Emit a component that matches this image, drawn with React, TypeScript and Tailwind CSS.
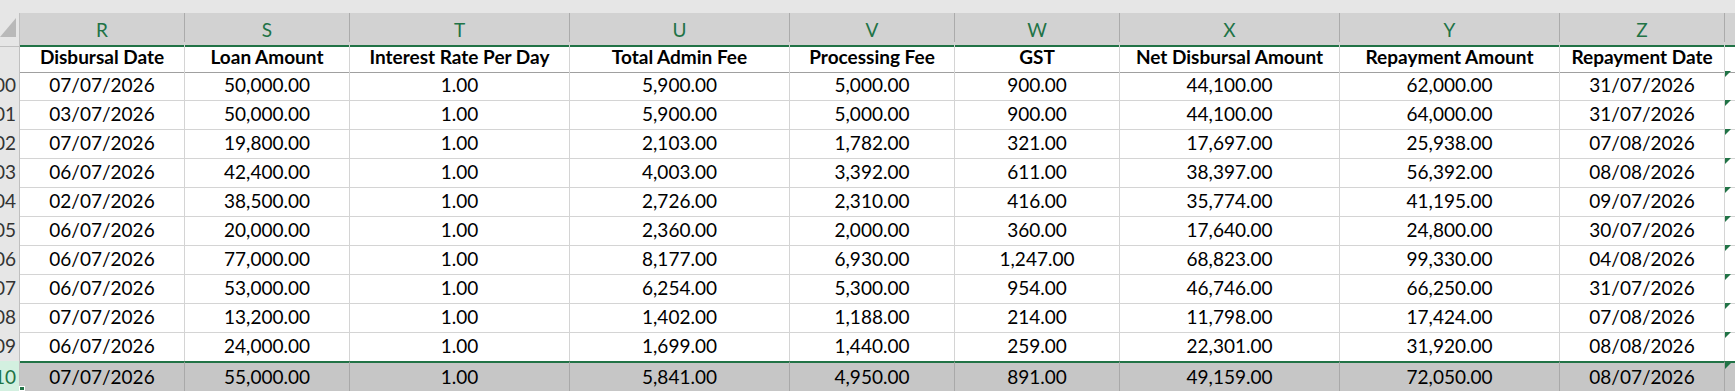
import React from "react";

const cols = ["R", "S", "T", "U", "V", "W", "X", "Y", "Z"];

const headers = [
  "Disbursal Date",
  "Loan Amount",
  "Interest Rate Per Day",
  "Total Admin Fee",
  "Processing Fee",
  "GST",
  "Net Disbursal Amount",
  "Repayment Amount",
  "Repayment Date",
];

const rows: string[][] = [
  ["07/07/2026", "50,000.00", "1.00", "5,900.00", "5,000.00", "900.00", "44,100.00", "62,000.00", "31/07/2026"],
  ["03/07/2026", "50,000.00", "1.00", "5,900.00", "5,000.00", "900.00", "44,100.00", "64,000.00", "31/07/2026"],
  ["07/07/2026", "19,800.00", "1.00", "2,103.00", "1,782.00", "321.00", "17,697.00", "25,938.00", "07/08/2026"],
  ["06/07/2026", "42,400.00", "1.00", "4,003.00", "3,392.00", "611.00", "38,397.00", "56,392.00", "08/08/2026"],
  ["02/07/2026", "38,500.00", "1.00", "2,726.00", "2,310.00", "416.00", "35,774.00", "41,195.00", "09/07/2026"],
  ["06/07/2026", "20,000.00", "1.00", "2,360.00", "2,000.00", "360.00", "17,640.00", "24,800.00", "30/07/2026"],
  ["06/07/2026", "77,000.00", "1.00", "8,177.00", "6,930.00", "1,247.00", "68,823.00", "99,330.00", "04/08/2026"],
  ["06/07/2026", "53,000.00", "1.00", "6,254.00", "5,300.00", "954.00", "46,746.00", "66,250.00", "31/07/2026"],
  ["07/07/2026", "13,200.00", "1.00", "1,402.00", "1,188.00", "214.00", "11,798.00", "17,424.00", "07/08/2026"],
  ["06/07/2026", "24,000.00", "1.00", "1,699.00", "1,440.00", "259.00", "22,301.00", "31,920.00", "08/08/2026"],
  ["07/07/2026", "55,000.00", "1.00", "5,841.00", "4,950.00", "891.00", "49,159.00", "72,050.00", "08/07/2026"],
];

const rowNums = ["00", "01", "02", "03", "04", "05", "06", "07", "08", "09", "10"];

// same template for every row so the column lines stay aligned
const gridCols =
  "grid grid-cols-[20px_165px_165px_220px_220px_165px_165px_220px_220px_165px_10px]";

function ErrorMark() {
  return (
    <svg width="6" height="6" className="absolute left-0 top-0">
      <polygon points="0,0 6,0 0,6" fill="#217346" />
    </svg>
  );
}

export default function App() {
  const last = rows.length - 1;

  return (
    <div className="w-[1735px] h-[391px] overflow-hidden bg-white font-['Lato',sans-serif] text-[19px] text-black">
      <div className="h-[13px] bg-[#e6e6e6]" />

      {/* column letters */}
      <div className={`${gridCols} h-[29px]`}>
        <div className="relative bg-[#e6e6e6] border-r border-b border-[#c0c0c0]">
          <svg width="20" height="28" className="absolute left-0 top-0">
            <polygon points="0,24 16,24 16,5" fill="#b9b9b9" />
          </svg>
        </div>
        {cols.map((c) => (
          <div
            key={c}
            className="flex items-center justify-center pt-[3px] bg-[#d2d2d2] border-r border-[#ababab] border-b-2 border-b-[#217346] text-[#217346]"
          >
            {c}
          </div>
        ))}
        <div className="bg-[#d2d2d2] border-b-2 border-b-[#217346]" />
      </div>

      {/* field names */}
      <div className={`${gridCols} h-[29px]`}>
        <div className="bg-[#e6e6e6] border-r border-b border-[#c0c0c0]" />
        {headers.map((h) => (
          <div
            key={h}
            className="flex items-center justify-center pt-[1px] font-bold whitespace-nowrap border-r border-[#d4d4d4] border-b border-b-[#a0a0a0]"
          >
            {h}
          </div>
        ))}
        <div className="border-b border-[#a0a0a0]" />
      </div>

      {rows.map((r, i) => {
        const sel = i === last;
        return (
          <div key={i} className={`${gridCols} relative ${sel ? "h-[30px]" : "h-[29px]"}`}>
            <div
              className={`flex items-center justify-end pr-[3px] overflow-hidden border-r border-b border-[#c0c0c0] ${
                sel ? "bg-[#d3f0e0] text-[#217346]" : "bg-[#e6e6e6] text-[#333]"
              }`}
            >
              {rowNums[i]}
            </div>
            {r.map((v, j) => (
              <div
                key={j}
                className={`flex items-center justify-center whitespace-nowrap ${
                  sel
                    ? "bg-[#c6c6c6] border-r border-[#a9a9a9] border-y-2 border-y-[#217346]"
                    : "border-r border-b border-[#d4d4d4]"
                }`}
              >
                {v}
              </div>
            ))}
            <div
              className={`relative ${
                sel ? "bg-[#c6c6c6] border-y-2 border-[#217346]" : "border-b border-[#d4d4d4]"
              }`}
            >
              <ErrorMark />
            </div>
            {sel && (
              <div className="absolute left-[19px] bottom-0 w-[6px] h-[5px] bg-[#217346] border border-white" />
            )}
          </div>
        );
      })}
    </div>
  );
}
